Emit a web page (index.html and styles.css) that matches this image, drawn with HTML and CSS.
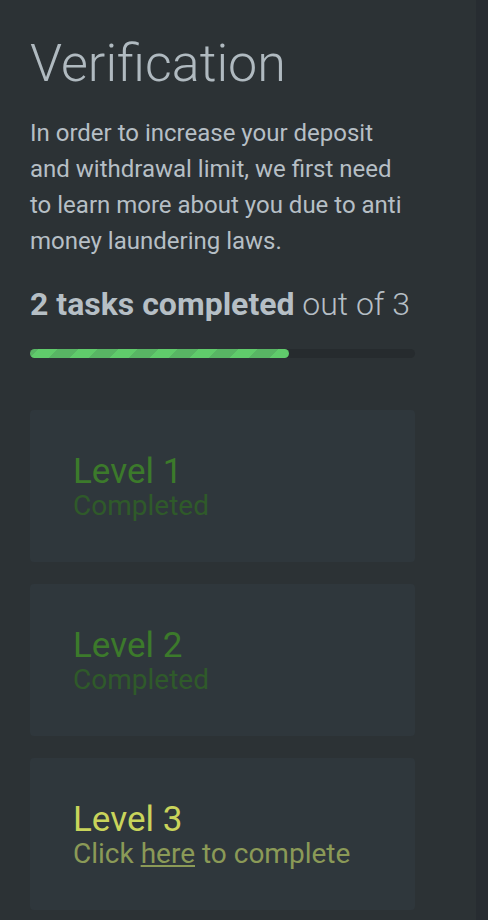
FILE: index.html
```html
<!DOCTYPE html>
<html>
  <head>
    <meta charset="utf-8" />
    <link rel="stylesheet" href="styles.css">
  </head>

  <body>
    <div id="wrapper">
      <div id="content">
        <h1>Verification</h1>
        <p class="intro">
          In order to increase your deposit and withdrawal limit, we first need
          to learn more about you due to anti money laundering laws.
        </p>

        <div class="tasks">
          <b>2 tasks completed</b> out of 3
        </div>
        <div class="progress">
          <div class="bar" style="width: 67.3%"></div>
        </div>

        <div class="level done">
          <div class="name">Level 1</div>
          <div class="status">Completed</div>
        </div>

        <div class="level done">
          <div class="name">Level 2</div>
          <div class="status">Completed</div>
        </div>

        <div class="level todo">
          <div class="name">Level 3</div>
          <div class="status">Click <a href="#">here</a> to complete</div>
        </div>
      </div>
      <div id="side"></div>
    </div>
  </body>
</html>
```

FILE: styles.css
```css
body {
  background-color: #2c3235;
  color: #b6bfc5;
  font-family: Roboto, "Liberation Sans", sans-serif;
  margin: 0;
  padding: 0;
}

#wrapper {
  display: flex;
  min-height: 920px;
}

#content {
  flex: 1;
  padding: 34px 61px 0 30px;
}

#side {
  width: 12px;
  background-color: #272c31;
}

h1 {
  font-size: 52px;
  font-weight: 300;
  line-height: 60px;
  margin: 0 0 21px;
  color: #b0bac0;
}

.intro {
  font-size: 24px;
  line-height: 36px;
  margin: 0 0 25px;
  padding-right: 6px;
}

.tasks {
  font-size: 32px;
  font-weight: 300;
  line-height: 40px;
}

.tasks b {
  font-weight: 700;
}

.progress {
  height: 9px;
  margin: 25px 0 52px;
  border-radius: 5px;
  background-color: #262b2e;
}

.bar {
  height: 100%;
  border-radius: 5px;
  background-color: #60cb6b;
  background-image: repeating-linear-gradient(
    -45deg,
    #60cb6b 0,
    #60cb6b 14px,
    #58b564 14px,
    #58b564 28.3px
  );
}

.level {
  background-color: #2f373c;
  border-radius: 4px;
  height: 152px;
  box-sizing: border-box;
  padding: 44px 43px 0;
  margin-bottom: 22px;
}

.name {
  font-size: 35px;
  line-height: 36px;
}

.status {
  font-size: 28px;
  line-height: 32px;
}

.done .name {
  color: #3c7a2b;
}

.done .status {
  color: #2f5a2a;
}

.todo .name {
  color: #c9d45b;
}

.todo .status,
.todo a {
  color: #8b9a57;
}
```
